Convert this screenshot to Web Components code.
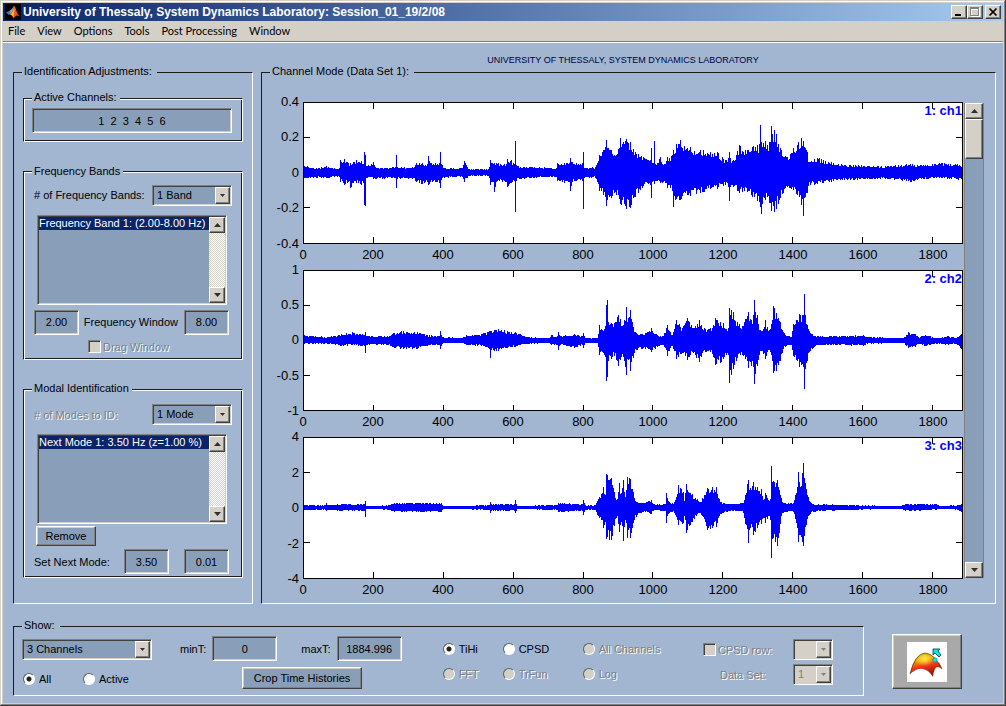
<!DOCTYPE html>
<html lang="en">
<head>
<meta charset="utf-8">
<title>University of Thessaly, System Dynamics Laboratory</title>
<style>
  html, body { margin: 0; }
  body { font: 11px/14px "Liberation Sans", Arial, sans-serif; color: #000; background: #d4d0c8; }
</style>
</head>
<body>
<lab-window></lab-window>

<script>
const FACE = '#d4d0c8';
const BASE = `
  *, *::before, *::after { box-sizing: border-box; }
  button, input, select { font: inherit; color: inherit; margin: 0; border-radius: 0; outline: none; }
  .sunken { border: 1px solid; border-color: #808080 #fff #fff #808080; box-shadow: inset 1px 1px #404040, inset -1px -1px ${FACE}; }
  .raised { border: 1px solid; border-color: #fff #404040 #404040 #fff; box-shadow: inset -1px -1px #808080, inset 1px 1px ${FACE}; }
  .off { color: #808080; text-shadow: 1px 1px #fff; }
`;

class Part extends HTMLElement {
  connectedCallback() {
    if (this.shadowRoot) return;
    const root = this.attachShadow({ mode: 'open' });
    root.innerHTML = `<style>${BASE}${this.css()}</style>${this.html()}`;
  }
  attr(name, fallback = '') { return this.getAttribute(name) ?? fallback; }
  css() { return ''; }
  html() { return '<slot></slot>'; }
}

/* Title bar with caption buttons */
customElements.define('title-bar', class extends Part {
  css() { return `
    :host { display: flex; align-items: center; height: 18px; padding: 0 2px; gap: 2px;
      background: linear-gradient(90deg, #0a246a, #a6caf0); color: #fff; }
    h1 { flex: 1; margin: 0; font: bold 12px/18px "Liberation Sans", Arial, sans-serif; white-space: nowrap; overflow: hidden; }
    .buttons { display: flex; }
    button { width: 16px; height: 14px; padding: 0; background: ${FACE}; }
    button:last-child { margin-left: 2px; }
    svg { display: block; }
  `; }
  html() { return `
    <svg width="16" height="16" viewBox="0 0 16 16" aria-hidden="true">
      <rect width="16" height="16" fill="#000"/>
      <path d="M1 8.500L5 6.500L7 8.500L4 11Z" fill="#3f7fb0"/>
      <path d="M5 6.500Q7 5.500 9 2L8.500 7L5.500 10.500Z" fill="#7fb6c8"/>
      <path d="M9 1.500Q10.500 3 11.500 7T15 12.500Q12.500 11 11.500 11.500T8.500 14.500Q7.500 11 4.500 10.500Q7.500 8.500 9 1.500Z" fill="#e2561b"/>
      <path d="M9.500 2.500Q9.500 8 8.500 13.500Q7.500 11 5.500 10.500Q8 8.500 9.500 2.500Z" fill="#f6b64a"/>
    </svg>
    <h1><slot></slot></h1>
    <div class="buttons">
      <button class="raised" aria-label="Minimize"><svg width="14" height="12"><path d="M3 8h6v2H3z"/></svg></button>
      <button class="raised" aria-label="Maximize" disabled><svg width="14" height="12" fill="none" shape-rendering="crispEdges"><path d="M3.500 3.500h8v7h-8zM3 2.500h9" stroke="#fff"/><path d="M2.500 2.500h8v7h-8zM2 1.500h9" stroke="#808080"/></svg></button>
      <button class="raised" aria-label="Close"><svg width="14" height="12"><path d="M3.500 2.500l7 7M10.500 2.500l-7 7" stroke="#000" stroke-width="1.700"/></svg></button>
    </div>`; }
});

/* Menu bar */
customElements.define('menu-bar', class extends Part {
  css() { return `
    :host { display: block; height: 22px; border-bottom: 1px solid #fff; box-shadow: inset 0 -1px #808080; background: ${FACE}; }
    nav { display: flex; gap: 12px; padding: 0 5px; }
    button { border: 0; padding: 0; background: none; font: 11px/20px Lato, "Liberation Sans", sans-serif; }
  `; }
  html() { return `<nav>${this.attr('items').split('|').map(t => `<button>${t}</button>`).join('')}</nav>`; }
});

/* Framed group with a caption in its top edge */
customElements.define('group-box', class extends Part {
  css() { return `
    :host { display: grid; }
    fieldset { display: grid; min-width: 0; margin: 0; padding: 0;
      border: 1px solid; border-color: #1c1c1c #fff #fff #1c1c1c; }
    :host([etched]) fieldset { box-shadow: inset 1px 1px #fff, inset -1px -1px #1c1c1c; }
    legend { margin-left: 8px; padding: 0 5px 0 2px; height: 14px; line-height: 12px; background: #a2b6d2; }
    :host([etched]) legend { padding-right: 3px; }
    .in { display: grid; min-width: 0; padding: var(--pad, 0); }
  `; }
  html() { return `<fieldset><legend>${this.attr('caption')}</legend><div class="in"><slot></slot></div></fieldset>`; }
});

/* Labelled text field */
customElements.define('text-field', class extends Part {
  css() { return `
    :host { display: flex; align-items: center; justify-content: flex-end; gap: 6px; }
    input { width: var(--w, 45px); height: 25px; padding: 0 2px; text-align: center; background: #899eb9; }
    :host([wide]) input { flex: 1; width: 100%; }
    :host([spread]) { flex: 1; justify-content: space-between; }
  `; }
  html() {
    const label = this.attr('label');
    return `${label ? `<label for="f">${label}</label>` : ''}
      <input id="f" class="sunken" value="${this.attr('value')}" ${label ? '' : `aria-label="${this.attr('hint')}"`}>`;
  }
});

/* Labelled drop-down */
customElements.define('drop-down', class extends Part {
  css() { return `
    :host { display: flex; align-items: center; justify-content: space-between; }
    .box { position: relative; width: var(--w, 80px); height: 21px; background: #899eb9; }
    select { appearance: none; display: block; width: 100%; height: 18px; padding: 0 18px 0 4px; border: 0; background: none; opacity: 1; }
    .arrow { position: absolute; right: 1px; top: 1px; width: 15px; height: 17px; background: ${FACE}; pointer-events: none; }
    svg { display: block; }
    :host([disabled]) .box { background: ${FACE}; }
    :host([disabled]) select { color: #808080; }
  `; }
  html() {
    const label = this.attr('label'), off = this.hasAttribute('disabled');
    const grey = off || this.hasAttribute('dim');
    return `${label ? `<label for="s" class="${grey ? 'off' : ''}">${label}</label>` : ''}
      <div class="box sunken">
        <select id="s" ${off ? 'disabled' : ''} ${label ? '' : `aria-label="${this.attr('hint')}"`}><option>${this.attr('value')}</option></select>
        <span class="arrow raised"><svg width="13" height="15"><path d="M4 6h5L6.500 9z" fill="${off ? '#808080' : '#303030'}"/></svg></span>
      </div>`;
  }
});

/* Vertical scroll bar */
customElements.define('scroll-bar', class extends Part {
  css() { return `
    :host { display: flex; flex-direction: column; width: 16px; background: repeating-conic-gradient(#fff 0 25%, ${FACE} 0 50%) 0 0 / 2px 2px; }
    :host([slider]) { width: 20px; background: #899eb9; border: solid #808080; border-width: 0 1px; }
    button { height: 16px; padding: 0; background: ${FACE}; display: grid; place-items: center; flex: none; }
    .track { flex: 1; }
    .thumb { height: 40px; background: ${FACE}; }
  `; }
  html() { return `
    <button class="raised" aria-label="Scroll up"><svg width="7" height="4"><path d="M0 4h7L3.500 0z" fill="#303030"/></svg></button>
    <div class="track">${this.hasAttribute('slider') ? '<div class="thumb raised"></div>' : ''}</div>
    <button class="raised" aria-label="Scroll down"><svg width="7" height="4"><path d="M0 0h7L3.500 4z" fill="#303030"/></svg></button>`; }
});

/* List of entries with a scroll bar */
customElements.define('list-box', class extends Part {
  css() { return `
    :host { display: block; }
    .box { display: flex; height: 90px; padding: 1px; background: #899eb9; }
    select { appearance: none; flex: 1; min-width: 0; padding: 0; border: 0; background: none; overflow: hidden; height: 86px; }
    option { padding: 0; min-height: 13px; line-height: 13px; white-space: nowrap; }
    option:checked { background: #0a246a linear-gradient(#0a246a, #0a246a); color: #fff; -webkit-text-fill-color: #fff; }
  `; }
  html() { return `
    <div class="box sunken">
      <select size="6" aria-label="${this.attr('hint')}"><option selected>${this.attr('value')}</option></select>
      <scroll-bar></scroll-bar>
    </div>`; }
});

customElements.define('push-button', class extends Part {
  css() { return `
    :host { display: block; }
    button { display: grid; place-items: center; width: 100%; height: var(--h, 20px); padding: 0; background: var(--face, #899eb9); }
  `; }
  html() { return `<button class="raised" aria-label="${this.attr('hint', this.textContent.trim())}"><slot></slot></button>`; }
});

customElements.define('check-box', class extends Part {
  css() { return `
    :host { display: block; }
    label { display: flex; align-items: center; gap: 2px; }
    input { appearance: none; width: 13px; height: 13px; background: ${FACE}; }
  `; }
  html() { return `<label class="off"><input type="checkbox" class="sunken" disabled>${this.attr('label')}</label>`; }
});

/* Radio buttons in columns; "*" marks the chosen one, "!" a disabled one */
customElements.define('radio-set', class extends Part {
  css() { return `
    :host { display: grid; grid-template-columns: var(--cols); row-gap: 11px; }
    label { display: flex; align-items: center; gap: 4px; white-space: nowrap; }
    input { appearance: none; width: 12px; height: 12px; border-radius: 50%; border: 1px solid;
      border-color: #606060 #fff #fff #606060; background: #fff; }
    input:checked { background: radial-gradient(circle, #202020 0 2px, #fff 3px); }
    input:disabled { background: ${FACE}; }
  `; }
  html() {
    return this.attr('items').split('|').map(t => {
      const off = t.startsWith('!'), on = t.startsWith('*');
      return `<label class="${off ? 'off' : ''}"><input type="radio" name="r" ${off ? 'disabled' : ''} ${on ? 'checked' : ''}>${t.replace(/^[!*]/, '')}</label>`;
    }).join('');
  }
});

/* Signal envelopes: column:above/below the zero line */
const SIGNALS = {
  ch1: '0:6/5 12:4/5 22:6/5 30:4/4 35:4/4 36:12/9 38:9/8 40:13/12 44:9/9 46:9/15 52:12/10 57:11/12 59:8/10 60:20/32 61:17/33 62:6/5 69:10/6 71:5/6 80:4/6 91:5/5 92:17/15 93:5/6 108:5/6 112:9/9 118:9/11 123:8/9 124:16/12 126:9/9 135:9/10 136:20/15 137:8/7 140:4/5 158:4/4 160:11/9 163:5/5 164:3/3 184:3/3 186:12/12 189:8/9 190:9/19 192:9/9 202:8/9 203:13/14 207:12/10 210:8/8 211:31/39 212:7/8 216:5/6 230:5/5 252:4/4 253:9/8 260:9/10 265:9/9 266:14/18 268:10/9 278:9/8 279:20/36 280:4/5 291:5/5 295:17/18 301:25/24 302:32/33 307:22/25 312:17/22 316:34/31 322:33/36 326:30/35 332:20/24 340:15/13 347:12/12 348:24/25 349:9/9 350:9/8 351:31/11 352:8/8 357:15/10 362:8/10 364:15/15 369:17/18 370:22/34 373:28/26 377:32/27 387:25/23 397:22/20 407:20/16 414:20/16 422:12/12 425:14/14 426:20/28 427:14/14 430:12/14 436:27/20 444:22/19 449:25/24 454:27/28 456:28/29 457:47/34 458:30/41 462:31/27 467:30/30 468:46/38 471:42/39 473:38/36 477:24/25 484:15/14 490:24/17 498:34/32 500:31/43 504:20/20 505:10/13 514:14/11 520:12/10 530:9/8 547:7/7 574:6/6 587:6/6 607:8/9 620:7/6 636:9/5 658:8/7',
  ch2: '0:5/3 23:3/3 37:6/5 48:8/4 58:6/5 60:5/5 61:8/12 62:4/4 83:4/4 90:7/7 99:9/8 113:8/8 123:5/5 135:4/4 136:9/8 138:3/3 158:2/2 162:5/4 177:6/5 185:9/8 186:9/17 187:9/9 190:10/10 194:11/10 203:9/7 211:8/6 223:3/3 245:2/2 247:5/4 253:4/4 254:8/9 256:4/4 270:6/7 278:4/4 279:7/7 281:2/2 293:2/2 295:15/14 300:11/14 301:14/16 302:35/40 303:40/36 304:18/20 310:17/15 314:25/25 319:15/16 322:33/34 323:18/18 326:30/30 330:12/14 334:6/9 342:7/8 348:12/11 354:5/6 360:4/4 364:15/15 369:5/5 373:20/18 379:12/12 384:22/19 390:12/12 396:20/21 402:11/11 409:12/13 412:22/24 417:18/22 420:17/18 423:11/14 425:12/14 426:32/42 430:28/28 434:18/17 439:14/14 445:28/27 448:20/25 450:25/26 451:40/43 454:25/25 456:10/14 460:11/13 462:20/18 465:9/9 469:20/20 470:34/32 473:27/30 477:18/20 480:8/8 488:3/4 490:16/15 496:26/26 500:25/26 501:46/48 502:25/28 504:15/20 507:7/10 512:4/5 530:4/4 560:5/5 564:3/3 600:2/2 605:8/7 612:6/6 615:3/3 622:5/5 634:2/3 645:4/4 653:2/3 658:8/9',
  ch3: '0:2/2 21:2/2 22:4/3 24:2/2 37:3/3 60:3/3 61:6/9 62:1/1 85:2/2 90:4/4 137:4/4 139:1/1 185:2/2 186:5/5 187:3/3 210:3/3 211:7/5 213:1/1 245:2/2 253:2/2 254:4/4 278:3/3 279:7/7 281:2/2 291:2/2 293:6/7 299:20/20 301:12/14 302:33/31 307:29/32 310:15/18 313:8/8 315:24/24 317:14/14 319:27/33 321:10/12 323:30/30 326:28/30 329:15/15 334:5/7 340:4/4 348:7/6 350:3/3 362:3/3 363:14/15 365:6/6 369:4/4 371:5/5 375:22/17 380:15/15 381:6/8 383:23/25 389:13/14 397:5/5 404:19/22 409:20/20 413:20/19 417:5/6 430:3/3 440:4/5 445:27/35 447:19/20 450:25/27 454:20/20 458:18/16 460:7/10 462:14/15 466:6/8 467:8/12 468:41/50 470:26/30 474:27/38 479:5/5 490:4/4 494:20/20 495:35/34 497:20/27 500:44/38 503:18/17 506:6/7 510:3/4 520:3/3 547:2/2 597:1/1 602:3/3 633:3/2 637:1/1 654:2/2 658:3/5',
};

function tracePath(name) {
  const points = SIGNALS[name].split(' ').map(p => p.split(/[:/]/).map(Number));
  let seed = name.charCodeAt(2) * 7919;
  const rand = () => (seed = (seed * 1103515245 + 12345) % 2147483648) / 2147483648;
  let d = '', i = 0;
  for (let x = 0; x < 659; x++) {
    while (i < points.length - 2 && points[i + 1][0] <= x) i++;
    const [xa, ua, da] = points[i], [xb, ub, db] = points[i + 1];
    const t = Math.min(1, (x - xa) / (xb - xa));
    const exact = x === xa;
    const up = (ua + (ub - ua) * t) * (exact ? 1 : 0.68 + 0.34 * rand());
    const down = (da + (db - da) * t) * (exact ? 1 : 0.68 + 0.34 * rand());
    d += `M${x + 0.5} ${69 - Math.round(up)}V${70 + Math.max(1, Math.round(down))}`;
  }
  return d;
}

/* One time-history plot */
customElements.define('signal-plot', class extends Part {
  css() { return `
    :host { display: grid; grid-template: 1fr 24px / 41px 1fr; flex: 1; min-height: 120px; font-size: 13px; line-height: 14px; }
    .y { display: flex; flex-direction: column; justify-content: space-between; margin: -7px 0; padding-right: 4px; text-align: right; }
    .plot { position: relative; border: 1px solid #000; background: #fff; min-width: 0; }
    .plot svg { position: absolute; inset: 0; width: 100%; height: 100%; shape-rendering: crispEdges; }
    b { position: absolute; top: 1px; right: 0; color: #00f; }
    .x { grid-column: 2; display: grid; grid-template-columns: repeat(9, 200fr) 85fr; padding-top: 4px; }
    .x span { width: 60px; margin-left: -30px; text-align: center; }
  `; }
  html() {
    const ys = this.attr('y').split(' ');
    let ticks = '';
    for (let k = 1; k < 10; k++) ticks += `M${70 * k - 0.5} 0v6M${70 * k - 0.5} 140v-6`;
    for (let k = 1; k < 4; k++) ticks += `M0 ${35 * k - 0.5}h6M659 ${35 * k - 0.5}h-6`;
    return `
      <div class="y">${ys.map(v => `<span>${v}</span>`).join('')}</div>
      <div class="plot">
        <svg viewBox="0 0 659 140" preserveAspectRatio="none" fill="none">
          <path d="${ticks}" stroke="#000"/><path d="${tracePath(this.attr('signal'))}" stroke="#00f"/>
        </svg>
        <b>${this.attr('label')}</b>
      </div>
      <div class="x">${[...Array(10)].map((_, k) => `<span>${k * 200}</span>`).join('')}</div>`;
  }
});

/* Curved-surface picture on the launch button */
customElements.define('surface-icon', class extends Part {
  css() { return ':host { display: block; width: 40px; height: 40px; background: #fff; } svg { display: block; }'; }
  html() { return `
    <svg width="40" height="40" viewBox="0 0 40 40" aria-hidden="true">
      <defs>
        <linearGradient id="g" x1="0" y1="0" x2=".3" y2="1">
          <stop offset="0" stop-color="#b8a800"/><stop offset=".35" stop-color="#eea800"/>
          <stop offset=".62" stop-color="#ee3a1c"/><stop offset="1" stop-color="#8a0f0a"/>
        </linearGradient>
        <radialGradient id="h" cx=".45" cy=".25" r=".3"><stop offset="0" stop-color="#ffe94a"/><stop offset="1" stop-color="#ffe94a" stop-opacity="0"/></radialGradient>
      </defs>
      <path d="M3 32Q7 12 18 11Q25 11 29 19Q33 20 35 27Q30 23 28 27T26 35Q22 28 16 27T3 32Z" fill="url(#g)"/>
      <path d="M3 32Q7 12 18 11Q25 11 29 19Q33 20 35 27Q30 23 28 27T26 35Q22 28 16 27T3 32Z" fill="url(#h)"/>
      <path d="M3 32Q8 12 18 11Q28 12 35 27" fill="none" stroke="#5a3a10" stroke-width=".7"/>
      <path d="M26 7h7l-2 2 3 4-2 2-4-4-2 2z" fill="#00e8f0" stroke="#033" stroke-width=".8"/>
      <circle cx="28" cy="18" r="2.200" fill="#00e8f0" stroke="#066" stroke-width=".5"/>
    </svg>`; }
});

customElements.define('lab-window', class extends Part {
  css() { return `
    :host { display: flex; flex-direction: column; min-height: 100vh; min-width: 980px; padding: 3px; background: #a2b6d2;
      box-sizing: border-box;
      box-shadow: inset -1px -1px #404040, inset 1px 1px ${FACE}, inset -2px -2px #808080, inset 2px 2px #fff, inset 0 0 0 3px ${FACE}; }
    menu-bar { --gap: 11px; }
    main { flex: 1; display: grid; grid-template: 22px 1fr 92px / 240px 1fr; column-gap: 8px; padding: 0 7px 7px 10px; }
    h2 { grid-column: 2; margin: 0; padding: 10px 11px 0 0; text-align: center; font: 9px/14px "Liberation Sans", Arial, sans-serif; color: #000040; }
    .left { --pad: 12px 9px 25px; }
    .stack { display: flex; flex-direction: column; justify-content: space-between; }
    .channels { --pad: 3px 10px 8px 8px; }
    .bands { --pad: 6px 10px 5px 10px; }
    .modes { --pad: 8px 10px 3px 10px; }
    .col { display: flex; flex-direction: column; }
    .row { display: flex; justify-content: space-between; }
    .wide { width: 190px; margin: 9px 0 5px 3px; }
    .bands .row, .modes .row { margin-right: 3px; }
    .drag { margin: 5px 0 0 54px; }
    .modes .wide { margin-bottom: 2px; }
    .remove { width: 60px; margin: 0 0 3px 2px; }
    .set { gap: 15px; }
    .right { --pad: 23px 11px 0 0; }
    .plots { display: grid; grid-template-columns: 1fr 20px; column-gap: 1px; }
    .plots .col { gap: 2px; min-width: 0; }
    .plots scroll-bar { margin: 1px 0 25px; }
    .bottom { grid-column: 1 / -1; display: flex; align-items: flex-start; padding-top: 15px; }
    .show { flex: 1; align-self: stretch; --pad: 3px 30px 0 8px; }
    .tools { display: flex; align-items: flex-start; }
    .first { width: 130px; gap: 12px; margin-top: 3px; --w: 130px; }
    .first radio-set { --cols: 60px 70px; padding-left: 1px; }
    .times { margin-left: 28px; gap: 6px; }
    .times .row { gap: 24px; --w: 65px; }
    .times push-button { width: 120px; margin-left: 62px; --h: 22px; }
    .modeset { --cols: 60px 80px 90px; margin: 6px 0 0 41px; }
    .cpsd { width: 130px; margin: 3px 0 0 auto; gap: 4px; --w: 40px; }
    .cpsd .row { align-items: center; }
    .cpsd > drop-down { padding-left: 17px; }
    .launch { width: 70px; margin: 15px 34px 0 28px; --h: 55px; --face: #a9a9a9; }
  `; }
  html() { return `
    <title-bar>University of Thessaly, System Dynamics Laboratory: Session_01_19/2/08</title-bar>
    <menu-bar items="File|View|Options|Tools|Post Processing|Window"></menu-bar>
    <main>
      <h2>UNIVERSITY OF THESSALY, SYSTEM DYNAMICS LABORATORY</h2>
      <group-box class="left" caption="Identification Adjustments:">
        <div class="stack">
          <group-box etched class="channels" caption="Active Channels:"><text-field wide hint="Active channels" value="1  2  3  4  5  6"></text-field></group-box>
          <group-box etched class="bands" caption="Frequency Bands">
            <div class="col">
              <drop-down label="# of Frequency Bands:" value="1 Band"></drop-down>
              <list-box class="wide" hint="Frequency bands" value="Frequency Band 1: (2.00-8.00 Hz)"></list-box>
              <div class="row"><text-field hint="Lower frequency" value="2.00"></text-field><text-field label="Frequency Window" value="8.00"></text-field></div>
              <check-box class="drag" label="Drag Window"></check-box>
            </div>
          </group-box>
          <group-box etched class="modes" caption="Modal Identification">
            <div class="col">
              <drop-down dim label="# of Modes to ID:" value="1 Mode"></drop-down>
              <list-box class="wide" hint="Modes" value="Next Mode 1: 3.50 Hz (z=1.00 %)"></list-box>
              <push-button class="remove">Remove</push-button>
              <div class="row set"><text-field spread label="Set Next Mode:" value="3.50"></text-field><text-field hint="Damping" value="0.01"></text-field></div>
            </div>
          </group-box>
        </div>
      </group-box>
      <group-box class="right" caption="Channel Mode (Data Set 1):">
        <div class="plots">
          <div class="col">
            <signal-plot signal="ch1" label="1: ch1" y="0.4 0.2 0 -0.2 -0.4"></signal-plot>
            <signal-plot signal="ch2" label="2: ch2" y="1 0.5 0 -0.5 -1"></signal-plot>
            <signal-plot signal="ch3" label="3: ch3" y="4 2 0 -2 -4"></signal-plot>
          </div>
          <scroll-bar slider></scroll-bar>
        </div>
      </group-box>
      <div class="bottom">
        <group-box class="show" caption="Show:">
          <div class="tools">
            <div class="col first">
              <drop-down hint="Channels shown" value="3 Channels"></drop-down>
              <radio-set items="*All|Active"></radio-set>
            </div>
            <div class="col times">
              <div class="row"><text-field label="minT:" value="0"></text-field><text-field label="maxT:" value="1884.996"></text-field></div>
              <push-button>Crop Time Histories</push-button>
            </div>
            <radio-set class="modeset" items="*TiHi|CPSD|!All Channels|!FFT|!TrFun|!Log"></radio-set>
            <div class="col cpsd">
              <div class="row"><check-box label="CPSD row:"></check-box><drop-down disabled hint="CPSD row" value=""></drop-down></div>
              <drop-down disabled label="Data Set:" value="1"></drop-down>
            </div>
          </div>
        </group-box>
        <push-button class="launch" hint="Open surface plot"><surface-icon></surface-icon></push-button>
      </div>
    </main>`; }
});
</script>
</body>
</html>
